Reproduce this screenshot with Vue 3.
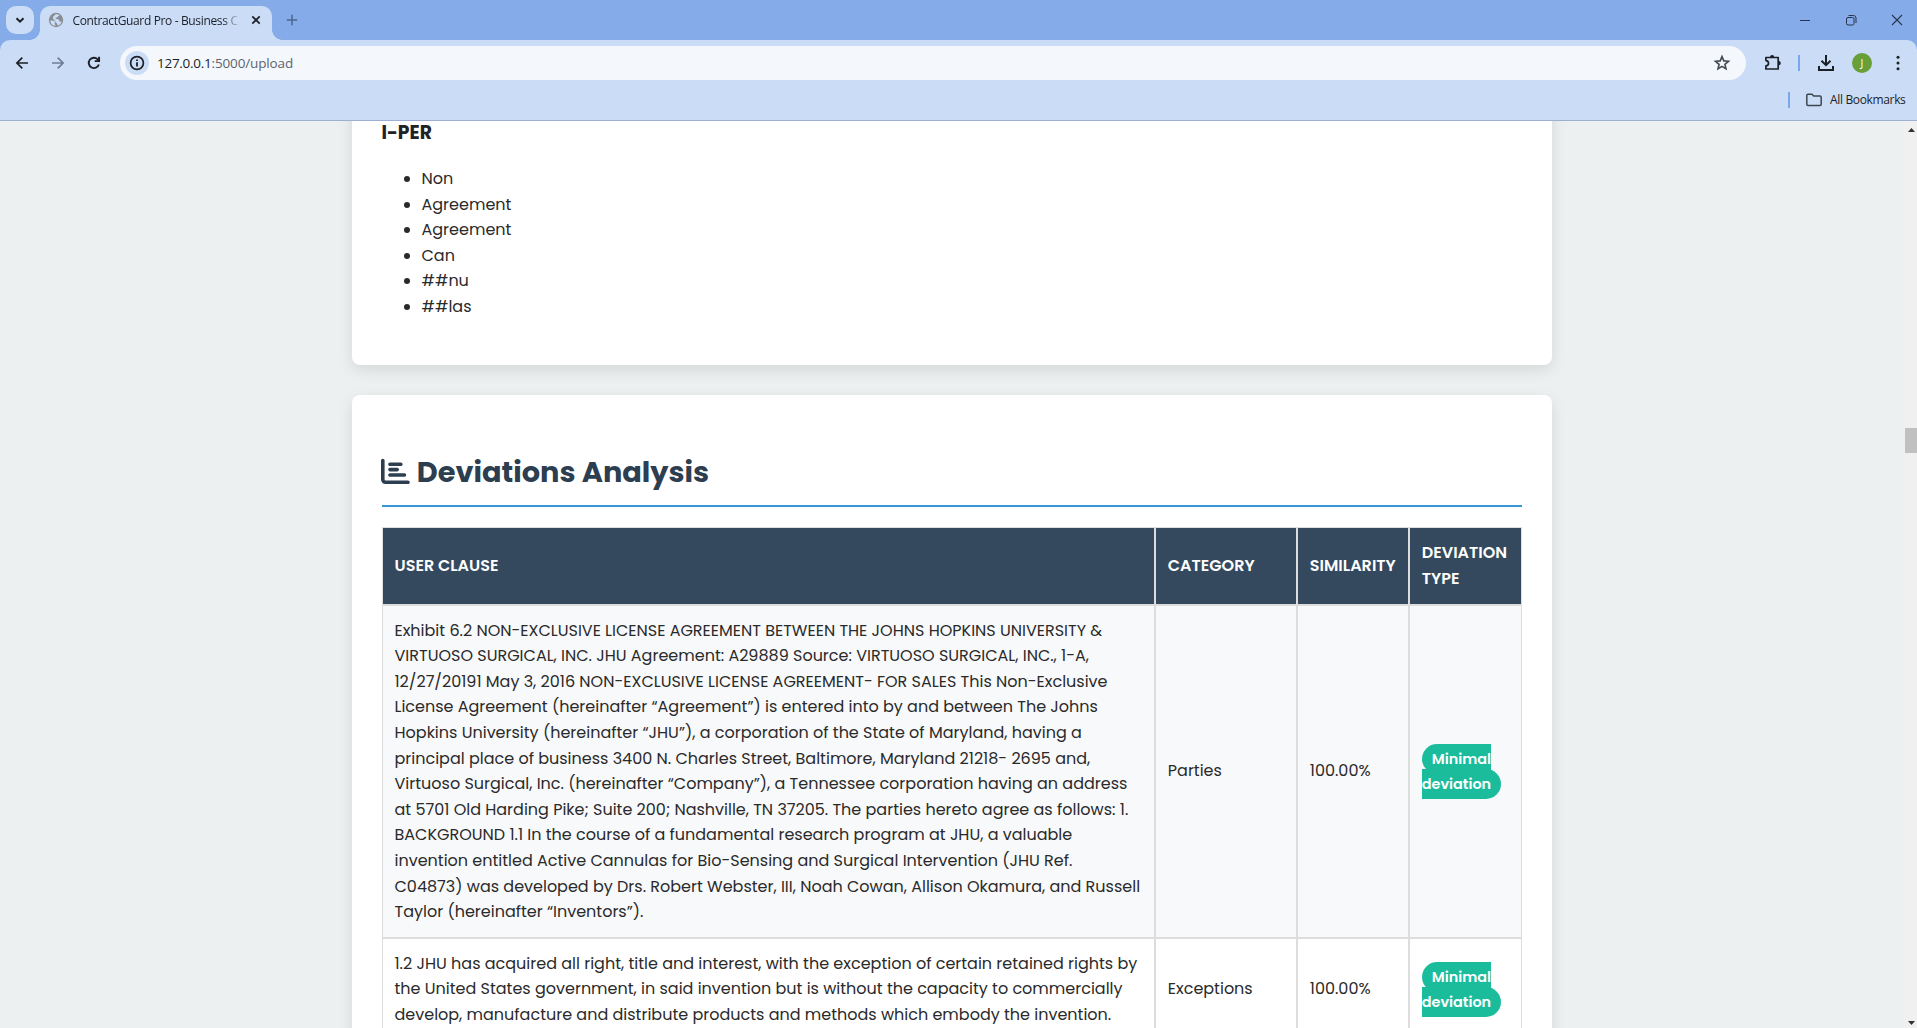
<script setup>
// Tracks an element's text so that its line measures the given width.
const vFit = {
  mounted(el, { value }) {
    const natural = el.getBoundingClientRect().width
    el.style.letterSpacing = (value - natural) / el.textContent.length + 'px'
  },
}

const entities = ['Non', 'Agreement', 'Agreement', 'Can', '##nu', '##las']

const columns = ['USER CLAUSE', 'CATEGORY', 'SIMILARITY', 'DEVIATION TYPE']

const rows = [
  {
    clause:
      'Exhibit 6.2 NON-EXCLUSIVE LICENSE AGREEMENT BETWEEN THE JOHNS HOPKINS UNIVERSITY & VIRTUOSO SURGICAL, INC. JHU Agreement: A29889 Source: VIRTUOSO SURGICAL, INC., 1-A, 12/27/20191 May 3, 2016 NON-EXCLUSIVE LICENSE AGREEMENT- FOR SALES This Non-Exclusive License Agreement (hereinafter “Agreement”) is entered into by and between The Johns Hopkins University (hereinafter “JHU”), a corporation of the State of Maryland, having a principal place of business 3400 N. Charles Street, Baltimore, Maryland 21218- 2695 and, Virtuoso Surgical, Inc. (hereinafter “Company”), a Tennessee corporation having an address at 5701 Old Harding Pike; Suite 200; Nashville, TN 37205. The parties hereto agree as follows: 1. BACKGROUND 1.1 In the course of a fundamental research program at JHU, a valuable invention entitled Active Cannulas for Bio-Sensing and Surgical Intervention (JHU Ref. C04873) was developed by Drs. Robert Webster, III, Noah Cowan, Allison Okamura, and Russell Taylor (hereinafter “Inventors”).',
    category: 'Parties',
    similarity: '100.00%',
    type: 'Minimal deviation',
  },
  {
    clause:
      '1.2 JHU has acquired all right, title and interest, with the exception of certain retained rights by the United States government, in said invention but is without the capacity to commercially develop, manufacture and distribute products and methods which embody the invention.',
    category: 'Exceptions',
    similarity: '100.00%',
    type: 'Minimal deviation',
  },
]
</script>

<template>
  <div class="window">
    <header class="chrome">
      <div class="tabstrip">
        <div class="tab-search">
          <svg width="12" height="12" viewBox="0 0 12 12"><path d="M2.5 4.2 6 7.7l3.500-3.500" fill="none" stroke="#1b1f26" stroke-width="2" /></svg>
        </div>
        <div class="tab">
          <svg class="favicon" width="16" height="16" viewBox="0 0 16 16">
            <circle cx="8" cy="8" r="7.200" fill="#888d94" />
            <path d="M2.300 8.500c2 0 4.200.1 4.700 1.300.4 1-.6 1.300-.2 2.200.3.800.9 1.100.5 2A6 6 0 0 1 2.300 8.500zM8 1.900c1.100.2 2.400.500 3.500 1.200-.3 1.200-1.500.9-2 1.800-.4.900-1.900.6-2.200 1.500.9.800 2.700.3 3.600 1.300.7.800.3 1.900 1.300 2.100.8.100 1.100-.4 1.700-.8a6.100 6.100 0 0 1-4.100 4.600c-.3-1.300-.9-2.300-1.900-3-1-.8-.5-1.800-1.500-2.500C5.200 7.300 4.600 6.400 5 5.100c.2-.9 1.500-1 1.700-1.800.2-.7.500-1.200 1.300-1.400z" fill="#cbdcf6" />
          </svg>
          <div class="tab-title"><span v-fit="155">ContractGuard Pro - Business</span><span class="tail"> C</span></div>
          <svg class="tab-close" width="10" height="10" viewBox="0 0 10 10"><path d="m1.300 1.300 7.400 7.400m0-7.400L1.300 8.700" stroke="#1b1f26" stroke-width="1.700" /></svg>
        </div>
        <svg class="new-tab" width="12" height="12" viewBox="0 0 12 12"><path d="M6 .8v10.400M.8 6h10.400" stroke="#4c6690" stroke-width="1.500" /></svg>
        <div class="controls">
          <svg width="12" height="12" viewBox="0 0 12 12"><path d="M1 6.500h10" stroke="#26354d" /></svg>
          <svg width="12" height="12" viewBox="0 0 12 12" fill="none" stroke="#26354d"><rect x="1.500" y="3.500" width="7.500" height="7.500" rx="1.500" /><path d="M3.500 1.500h5a2.500 2.500 0 0 1 2.500 2.500v5" /></svg>
          <svg width="12" height="12" viewBox="0 0 12 12"><path d="m1 1 10 10M11 1 1 11" stroke="#26354d" stroke-width="1.100" /></svg>
        </div>
      </div>
      <div class="panel">
        <div class="toolbar">
          <svg width="20" height="20" viewBox="0 0 20 20" fill="none" stroke="#1b1f26" stroke-width="1.700"><path d="M16 10H5M10.300 4.600 4.900 10l5.400 5.400" /></svg>
          <svg width="20" height="20" viewBox="0 0 20 20" fill="none" stroke="#6f7e97" stroke-width="1.700"><path d="M4 10h11M9.700 4.600l5.400 5.400-5.400 5.400" /></svg>
          <svg width="20" height="20" viewBox="0 0 20 20" fill="none" stroke="#1b1f26" stroke-width="1.900"><path d="M14.900 11.500A5.200 5.200 0 1 1 13.700 6.300L15 7.600M15.100 3.700V8.100H10.700" /></svg>
          <div class="omnibox">
            <div class="info">
              <svg width="16" height="16" viewBox="0 0 16 16"><circle cx="8" cy="8" r="6.400" fill="none" stroke="#1b1f26" stroke-width="1.700" /><path d="M8 7.200v4.300M8 4.400v1.600" stroke="#1b1f26" stroke-width="1.800" /></svg>
            </div>
            <div class="url"><span v-fit="54.5" class="host">127.0.0.1</span><span v-fit="81.5" class="path">:5000/upload</span></div>
            <svg class="star" width="18" height="18" viewBox="0 0 18 18" fill="none" stroke="#44484f" stroke-width="1.600"><path d="m9 2.600 1.800 4.300 4.700.4-3.600 3 1.100 4.600-4-2.500-4 2.500 1.100-4.600-3.600-3 4.700-.4z" /></svg>
          </div>
          <svg class="puzzle" width="20" height="20" viewBox="0 0 20 20"><path d="M2.900 4.500H15.200V16H2.900V12.900C4.600 12.800 5.500 11.800 5.500 10.300S4.600 7.700 2.900 7.600z" fill="none" stroke="#1b1f26" stroke-width="1.700" stroke-linejoin="round" /><path d="M7 4a2 2 0 0 1 4.200 0zM15.700 8.100a2 2 0 0 1 0 4.200z" fill="#1b1f26" /></svg>
          <i class="divider"></i>
          <svg width="20" height="20" viewBox="0 0 20 20" fill="none" stroke="#1b1f26" stroke-width="2"><path d="M10 2v9.800M5.500 7.700l4.500 4.500 4.500-4.500M3 13v4h14v-4" /></svg>
          <div class="avatar">J</div>
          <svg width="20" height="20" viewBox="0 0 20 20" fill="#1b1f26"><circle cx="10" cy="4.300" r="1.500" /><circle cx="10" cy="10" r="1.500" /><circle cx="10" cy="15.700" r="1.500" /></svg>
        </div>
        <div class="bookmarks">
          <i class="divider"></i>
          <svg class="folder" width="16" height="14" viewBox="0 0 16 14" fill="none" stroke="#3f454f" stroke-width="1.500"><path d="M.8 2.400Q.8 1.300 1.900 1.300h4L7.700 3h6.200q1.300 0 1.300 1.300v7q0 1.200-1.200 1.200H2q-1.200 0-1.200-1.200z" /></svg>
          <span v-fit="75.5">All Bookmarks</span>
        </div>
      </div>
    </header>

    <div class="viewport">
      <main class="page">
        <section class="card entities">
          <h3>I-PER</h3>
          <ul>
            <li v-for="(text, i) in entities" :key="i">{{ text }}</li>
          </ul>
        </section>

        <section class="card deviations">
          <h2>
            <svg width="28.8" height="28.8" viewBox="0 0 512 512" fill="currentColor"><path d="M32 32c17.700 0 32 14.300 32 32v336c0 8.800 7.200 16 16 16h400c17.700 0 32 14.300 32 32s-14.300 32-32 32H80c-44.200 0-80-35.800-80-80V64c0-17.700 14.300-32 32-32zm96 96c0-17.700 14.300-32 32-32h192c17.700 0 32 14.300 32 32s-14.300 32-32 32H160c-17.700 0-32-14.300-32-32zm32 64h128c17.700 0 32 14.300 32 32s-14.300 32-32 32H160c-17.700 0-32-14.300-32-32s14.300-32 32-32zm0 96h256c17.700 0 32 14.300 32 32s-14.300 32-32 32H160c-17.700 0-32-14.300-32-32s14.300-32 32-32z" /></svg>
            <span>Deviations Analysis</span>
          </h2>
          <table>
            <colgroup>
              <col class="c-clause" /><col class="c-category" /><col class="c-similarity" /><col />
            </colgroup>
            <thead>
              <tr>
                <th v-for="col in columns" :key="col">{{ col }}</th>
              </tr>
            </thead>
            <tbody>
              <tr v-for="(row, r) in rows" :key="r">
                <td>{{ row.clause }}</td>
                <td>{{ row.category }}</td>
                <td>{{ row.similarity }}</td>
                <td><span class="badge">{{ row.type }}</span></td>
              </tr>
            </tbody>
          </table>
        </section>
      </main>
      <aside class="scrollbar">
        <svg width="7" height="4" viewBox="0 0 7 4"><path d="M3.500 0 7 4H0z" fill="#303030" /></svg>
        <div class="track"><div class="thumb"></div></div>
        <svg width="7" height="4" viewBox="0 0 7 4"><path d="M0 0h7L3.500 4z" fill="#303030" /></svg>
      </aside>
    </div>
  </div>
</template>

<style>
body {
  margin: 0;
  overflow: hidden;
}
</style>

<style scoped>
.window {
  display: flex;
  flex-direction: column;
  width: 1917px;
  height: 1028px;
  overflow: hidden;
  background: #ecf0f1;
}
svg {
  display: block;
  flex: none;
}

/* Browser chrome */
.chrome {
  flex: none;
  height: 121px;
  box-sizing: border-box;
  border-bottom: 1px solid #9db0d3;
  background: #85abe9;
  font-family: "Open Sans", "Noto Sans", sans-serif;
  font-size: 12px;
  color: #1b1f26;
}
.tabstrip {
  display: flex;
  align-items: center;
  height: 40px;
  padding-left: 6px;
}
.tab-search {
  display: flex;
  align-items: center;
  justify-content: center;
  width: 28px;
  height: 28px;
  border-radius: 10px;
  background: #cbdcf6;
}
.tab {
  position: relative;
  display: flex;
  align-items: center;
  align-self: flex-end;
  box-sizing: border-box;
  width: 232px;
  height: 34px;
  margin-left: 6px;
  padding: 0 11px 6px 8px;
  border-radius: 10px 10px 0 0;
  background: #cbdcf6;
}
.tab::before,
.tab::after {
  content: "";
  position: absolute;
  bottom: 0;
  width: 10px;
  height: 10px;
}
.tab::before {
  left: -10px;
  background: radial-gradient(circle at 0 0, transparent 9.5px, #cbdcf6 10px);
}
.tab::after {
  right: -10px;
  background: radial-gradient(circle at 100% 0, transparent 9.5px, #cbdcf6 10px);
}
.tab-title {
  flex: none;
  width: 168px;
  margin: 1px auto 0 8.500px;
  white-space: pre;
  line-height: 18px;
  -webkit-mask-image: linear-gradient(90deg, #000 150px, transparent 167px);
  mask-image: linear-gradient(90deg, #000 150px, transparent 167px);
}
.new-tab {
  margin-left: 14px;
}
.controls {
  display: flex;
  gap: 34px;
  margin-left: auto;
  margin-right: 14px;
}
.panel {
  height: 80px;
  border-radius: 10px 10px 0 0;
  background: #cbdcf6;
}
.toolbar {
  display: flex;
  align-items: center;
  gap: 16px;
  height: 34px;
  padding: 6px 9px 0 12px;
}
.omnibox {
  display: flex;
  align-items: center;
  box-sizing: border-box;
  width: 1626px;
  height: 34px;
  padding: 0 15px 0 5px;
  border-radius: 17px;
  background: #f4f8fd;
}
.info {
  display: flex;
  align-items: center;
  justify-content: center;
  width: 24px;
  height: 24px;
  border-radius: 50%;
  background: #cbdcf6;
}
.url {
  flex: 1;
  margin-left: 8px;
  font-size: 13.500px;
  line-height: 20px;
}
.path {
  color: #5d646e;
}
.toolbar > .puzzle {
  margin-left: 1px;
}
.toolbar > .divider {
  margin-left: -1px;
}
.divider {
  width: 2px;
  height: 16px;
  background: #7aa7ec;
}
.avatar {
  width: 20px;
  height: 20px;
  border-radius: 50%;
  background: #689f38;
  color: #fff;
  font-size: 10.500px;
  line-height: 20px;
  text-align: center;
}
.bookmarks {
  display: flex;
  align-items: center;
  justify-content: flex-end;
  height: 40px;
  padding-right: 11.500px;
}
.bookmarks span {
  margin-top: -1px;
}
.folder {
  margin: 0 8px 0 16px;
}

/* Page */
.viewport {
  display: flex;
  flex: 1;
  min-height: 0;
  overflow: hidden;
}
.page {
  flex: 1;
  display: flex;
  flex-direction: column;
  align-items: center;
  font-family: Poppins, Inter, sans-serif;
  font-size: 16px;
  font-weight: 400;
  line-height: 1.6;
  color: #2a2a2a;
}
.card {
  flex: none;
  box-sizing: border-box;
  width: 1200px;
  margin-bottom: 30px;
  padding: 0 30px;
  border-radius: 8px;
  background: #fff;
  box-shadow: 0 5px 15px rgba(0, 0, 0, 0.1);
}
.entities {
  height: 264px;
  margin-top: -20px;
  padding-top: 16.600px;
}
h3 {
  margin: 0 0 18.400px;
  font-size: 18.720px;
  font-weight: 700;
  color: #222;
}
ul {
  margin: 0;
  padding-left: 40px;
}
.deviations {
  height: 800px;
  padding-top: 54px;
}
h2 {
  display: flex;
  align-items: center;
  gap: 7px;
  height: 46px;
  margin: 0 0 20px;
  padding-bottom: 10px;
  border-bottom: 2px solid #3498db;
  font-size: 28.800px;
  font-weight: 700;
  line-height: 46px;
  color: #2c3e50;
}
h2 svg {
  margin: -1px 0 0 -0.500px;
}
table {
  width: 1140px;
  border: 0;
  border-spacing: 0;
  table-layout: fixed;
}
.c-clause {
  width: 773px;
}
.c-category {
  width: 142px;
}
.c-similarity {
  width: 112px;
}
th,
td {
  padding: 12px 11.500px 12px 12.300px;
  border: 1px solid #ddd;
  text-align: left;
  vertical-align: middle;
}
th:first-child,
td:first-child {
  padding-left: 12px;
}
th {
  padding-top: 12.250px;
  padding-bottom: 12.250px;
  background: #34495e;
  color: #fff;
  font-weight: 600;
}
tbody tr:nth-child(odd) {
  background: #f8f9fb;
}
.badge {
  padding: 5px 10px;
  border-radius: 15px;
  background: #1abc9c;
  color: #fff;
  font-size: 14.400px;
  font-weight: 600;
}

.scrollbar {
  display: flex;
  flex-direction: column;
  align-items: center;
  box-sizing: border-box;
  width: 14px;
  padding: 7px 0 3px 2px;
  background: #f0f0f0;
}
.track {
  flex: 1;
  align-self: stretch;
}
.thumb {
  height: 25px;
  margin-top: 296px;
  background: #c0c0c0;
}
</style>
